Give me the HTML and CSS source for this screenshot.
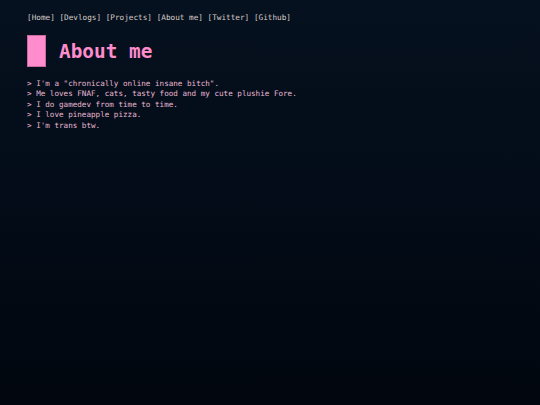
FILE: index.html
```html
<!DOCTYPE html>
<html>
<head>
<meta charset="utf-8">
<link rel="stylesheet" href="styles.css">
</head>
<body>
<div class="page">
  <nav class="nav">
    <a>[Home]</a> <a>[Devlogs]</a> <a>[Projects]</a> <a>[About me]</a> <a>[Twitter]</a> <a>[Github]</a>
  </nav>
  <header class="title">
    <span class="block"></span>
    <h1>About me</h1>
  </header>
  <div class="about">
    <p>&gt; I'm a "chronically online insane bitch".</p>
    <p>&gt; Me loves FNAF, cats, tasty food and my cute plushie Fore.</p>
    <p>&gt; I do gamedev from time to time.</p>
    <p>&gt; I love pineapple pizza.</p>
    <p>&gt; I'm trans btw.</p>
  </div>
</div>
</body>
</html>
```
FILE: styles.css
```css
html, body {
  margin: 0;
  height: 100%;
}
body {
  background: linear-gradient(to bottom, #06111f 0%, #030c18 45%, #01060e 100%);
  font-family: "DejaVu Sans Mono", "Liberation Mono", monospace;
}
.page {
  padding: 13px 27px;
}
.nav {
  font-size: 7.7px;
  line-height: 10px;
  color: #d6ccc8;
}
.nav a {
  color: inherit;
}
.title {
  display: flex;
  align-items: center;
  gap: 13px;
  margin-top: 12px;
}
.block {
  box-sizing: content-box;
  width: 17px;
  height: 30px;
  background: #ff8ccc;
  border: 1px solid #c86aa0;
}
.title h1 {
  margin: 0;
  padding-top: 2px;
  font-size: 19.4px;
  font-weight: 600;
  color: #ff8ccc;
  line-height: 30px;
}
.about {
  margin-top: 12px;
  font-size: 7.6px;
  color: #e8b8d2;
}
.about p {
  margin: 0;
  line-height: 10.4px;
}
```
